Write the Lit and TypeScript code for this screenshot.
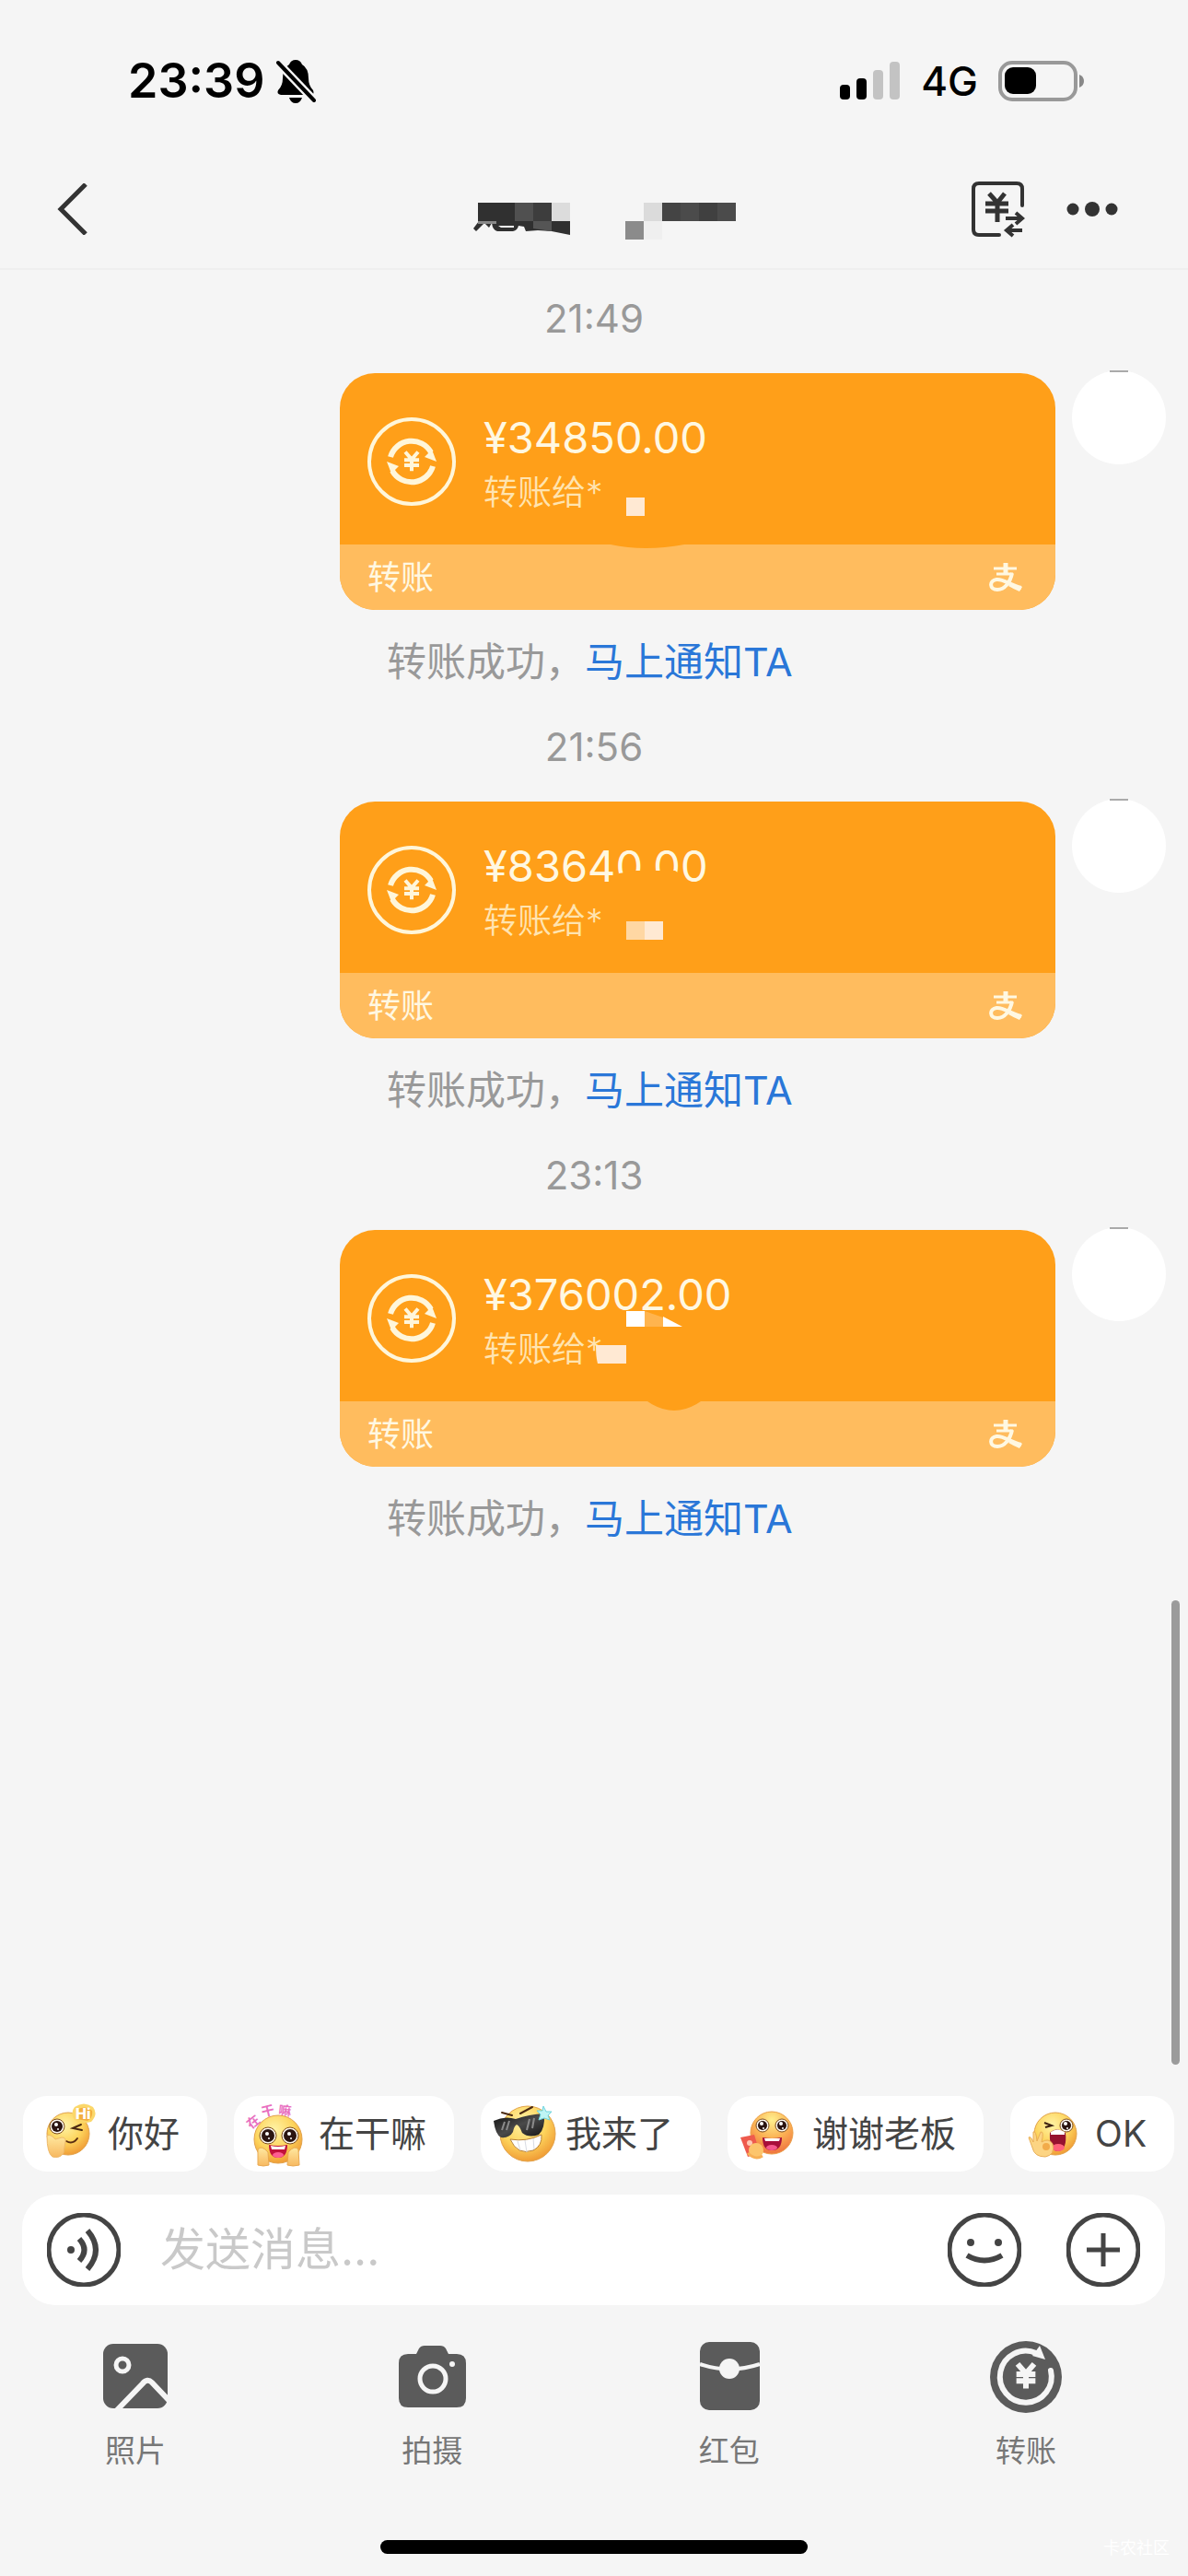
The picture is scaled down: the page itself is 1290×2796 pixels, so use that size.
import { LitElement, html, css, svg } from "lit";
import { customElement, property } from "lit/decorators.js";

const yen = (x: number, y: number, s: number, w: number, color: string) => svg`
  <path fill="none" stroke=${color} stroke-width=${w}
    d="M${x - s} ${y - s * 1.35} L${x} ${y - s * 0.2} L${x + s} ${y - s * 1.35} M${x} ${y - s * 0.2} V${y + s * 1.6} M${x - s * 1.15} ${y - s * 0.1} H${x + s * 1.15} M${x - s * 1.15} ${y + s * 0.7} H${x + s * 1.15}"/>`;

const gradients = svg`
  <defs>
    <radialGradient id="face" cx="0.42" cy="0.3" r="0.75">
      <stop offset="0" stop-color="#fff3a6"/><stop offset="0.55" stop-color="#fdd45c"/><stop offset="1" stop-color="#ee9430"/>
    </radialGradient>
    <radialGradient id="blush" cx="0.5" cy="0.2" r="0.85">
      <stop offset="0" stop-color="#fff08e"/><stop offset="0.5" stop-color="#fbb254"/><stop offset="1" stop-color="#ee6a3c"/>
    </radialGradient>
    <linearGradient id="hand" x1="0" y1="0" x2="0" y2="1">
      <stop offset="0" stop-color="#ffe9a0"/><stop offset="1" stop-color="#f7b860"/>
    </linearGradient>
    <linearGradient id="lens" x1="0" y1="0" x2="1" y2="1">
      <stop offset="0" stop-color="#0c0c0c"/><stop offset="0.5" stop-color="#4a4a4a"/><stop offset="1" stop-color="#141414"/>
    </linearGradient>
  </defs>`;

const eye = (x: number, y: number, r: number) => svg`
  <circle cx=${x} cy=${y} r=${r} fill="#fffaf0" stroke="#7a4a1c" stroke-width="1"/>
  <circle cx=${x} cy=${y} r=${r - 2} fill="#2b1512"/>
  <circle cx=${x - 1} cy=${y - 2} r="2" fill="#fff"/>
  <circle cx=${x + 1} cy=${y + 3} r="1" fill="#fff"/>`;

const emojis: Record<string, unknown> = {
  hi: svg`
    <circle cx="49" cy="41" r="23" fill="url(#face)" stroke="#e2a24a" stroke-width="1"/>
    ${eye(37, 33, 8)}
    <path d="M63 31 L54 35 L64 37" stroke="#4b2a12" stroke-width="2" fill="none" stroke-linecap="round"/>
    <path d="M47 49 Q54 53 59 46" stroke="#5a2d12" stroke-width="2" fill="none" stroke-linecap="round"/>
    <path d="M26 43 Q30 41 35 47 L42 45 Q47 45 46 50 L44 62 Q40 68 32 66 Q26 62 26 43 Z" fill="url(#hand)" stroke="#eeb96a" stroke-width="1"/>
    <path d="M56 12 Q66 5 76 12 Q82 20 74 28 Q64 31 56 26 Q51 18 56 12 Z" fill="#fbd76a"/>
    <path d="M60 14 Q68 10 75 16 Q76 24 70 27 L58 25 Z" fill="#f3ae3e"/>
    <text x="57" y="25" font-size="16" font-weight="800" fill="#fff">Hi</text>`,
  wow: svg`
    <g fill="#e86fc0" font-size="14" font-weight="700" text-anchor="middle">
      <text transform="translate(24 32) rotate(-38)">在</text>
      <text transform="translate(38 21) rotate(-14)">干</text>
      <text transform="translate(55 21) rotate(6)">嘛</text>
    </g>
    <circle cx="48" cy="47" r="26" fill="url(#face)" stroke="#e2a24a" stroke-width="1"/>
    ${eye(37, 43, 9)}${eye(61, 43, 9)}
    <path d="M38 53 Q48 55 58 53 Q58 67 48 67 Q38 67 38 53 Z" fill="#c1123c"/>
    <path d="M40 54 Q48 56 56 54 L55 58 H41 Z" fill="#fff"/>
    <ellipse cx="48" cy="64" rx="6" ry="3" fill="#ff5e92"/>
    <path d="M26 58 Q30 53 37 61 L38 75 Q32 77 26 75 Z M70 58 Q66 53 59 61 L58 75 Q64 77 71 75 Z" fill="url(#hand)" stroke="#e9a950" stroke-width="1"/>`,
  cool: svg`
    <circle cx="51" cy="41" r="30" fill="url(#face)" stroke="#e2a24a" stroke-width="1"/>
    <path d="M23 18 L34 21 M43 19 L56 12" stroke="#4b2a12" stroke-width="2" stroke-linecap="round"/>
    <path d="M14 27 Q26 21 38 25 Q52 20 69 19 Q70 36 63 42 Q52 46 45 40 Q42 32 39 31 Q36 33 35 39 Q31 46 22 45 Q16 42 14 27 Z" fill="url(#lens)"/>
    <path d="M26 28 L23 37 M31 27 L28 37 M53 25 L50 37 M58 24 L56 35" stroke="#8b8b8b" stroke-width="2"/>
    <path d="M32 47 Q50 50 66 42 Q67 54 57 59 Q40 65 32 47 Z" fill="#fff" stroke="#b98236" stroke-width="1"/>
    <path d="M40 49 L43 59 M48 48 L50 61 M57 46 L58 58" stroke="#d8dbe2" stroke-width="1"/>
    <path d="M68 11 L71 17 L77 17 L73 21 L75 26 L69 24 L63 26 L65 20 L61 16 L67 16 Z" fill="#bff5f4" stroke="#6fd3dc" stroke-width="1"/>`,
  thanks: svg`
    <circle cx="48" cy="40" r="23" fill="url(#blush)" stroke="#eba048" stroke-width="1"/>
    ${eye(38, 32, 7)}${eye(59, 32, 7)}
    <path d="M38 45 Q48 47 59 45 Q59 59 48 59 Q38 59 38 45 Z" fill="#a80f3a"/>
    <path d="M40 46 H57 L56 49 H41 Z" fill="#fff"/>
    <ellipse cx="48" cy="56" rx="6" ry="3" fill="#f5588c"/>
    <path d="M14 45 L29 42 L35 62 L22 66 Z" fill="#ee5a4d"/>
    <circle cx="24" cy="51" r="3" fill="#ffc9b4"/>
    <circle cx="31" cy="59" r="8" fill="#fcc56c"/>
    <path d="M22 62 Q30 70 38 65" stroke="#f7b055" stroke-width="3" fill="none"/>`,
  ok: svg`
    <circle cx="49" cy="41" r="23" fill="url(#face)" stroke="#e2a24a" stroke-width="1"/>
    <path d="M37 29 L45 32 L38 34" stroke="#3d2010" stroke-width="2" fill="none"/>
    ${eye(61, 32, 7)}
    <path d="M43 40 Q50 33 60 40 Q62 58 52 60 Q42 60 43 40 Z" fill="#96122f"/>
    <path d="M44 39 Q51 34 59 39 V42 H44 Z" fill="#fff"/>
    <ellipse cx="52" cy="56" rx="7" ry="4" fill="#ff6179"/>
    <path d="M20 45 Q22 43 25 50 L25 39 Q28 37 29 49 L33 39 Q37 38 34 50 Q42 45 46 52 Q49 64 38 66 Q26 66 24 56 Z" fill="#fcd483" stroke="#e9ae56" stroke-width="1"/>
    <circle cx="39" cy="55" r="4" fill="#f2ab4a"/>`,
};

const arrowRing = svg`
  <circle cx="48" cy="48" r="46" fill="none" stroke="#fff6da" stroke-width="4"/>
  <path d="M25 43 A24 24 0 0 1 69 38" fill="none" stroke="#fff6da" stroke-width="6"/>
  <path d="M70 35 L75 48 L62 43 Z" fill="#fff6da"/>
  <path d="M71 53 A24 24 0 0 1 27 58" fill="none" stroke="#fff6da" stroke-width="6"/>
  <path d="M26 61 L21 48 L34 53 Z" fill="#fff6da"/>
  ${yen(48, 47, 7, 4, "#fff6da")}`;

const masks = [
  svg`<rect x="311" y="135" width="20" height="20" fill="#ffe9d3"/>
      <path d="M294 186 Q331 194 374 186 Z" fill="#ff9f19"/>`,
  svg`<path d="M303 78 L322 75 H353 L364 75 L374 82 V96 H303 Z" fill="#ff9f19"/>
      <rect x="311" y="130" width="20" height="20" fill="#ffd7a3"/>
      <rect x="331" y="130" width="20" height="20" fill="#ffe9d3"/>`,
  svg`<rect x="311" y="88" width="20" height="17" fill="#fff"/>
      <path d="M331 88 L351 95 V105 H331 Z" fill="#ffb44e"/>
      <path d="M351 94 L372 105 H351 Z" fill="#fff"/>
      <path d="M278 125 H311 V145 H280 Q278 138 278 125 Z" fill="#ffe9d3"/>
      <path d="M334 186 Q363 206 392 186 Z" fill="#ff9f19"/>`,
];

@customElement("transfer-message")
class TransferMessage extends LitElement {
  @property() time = "";
  @property() amount = "";
  @property({ type: Number }) mask = 0;

  static styles = css`
    :host { display: block; }
    .time { text-align: center; padding: 25px 0 31px; font-size: 42px; line-height: 56px; color: #999; }
    .row { display: flex; justify-content: flex-end; align-items: flex-start; gap: 18px; padding-right: 24px; }
    .card { position: relative; flex: 0 1 777px; border-radius: 38px; overflow: hidden; background: #ff9f19; }
    .body { display: flex; align-items: center; gap: 30px; height: 186px; padding: 6px 30px 0; box-sizing: border-box; }
    .ring { width: 96px; height: 96px; flex: none; }
    .words { padding-top: 8px; }
    .amount { font-size: 47px; line-height: 60px; color: #fff8e2; }
    .to { font-size: 37px; line-height: 60px; color: #ffe4b0; font-weight: 350; }
    .foot { display: flex; justify-content: space-between; align-items: center; height: 71px; padding: 0 36px 0 30px; background: #ffbc5e; font-size: 36px; line-height: 60px; color: #fff8e2; }
    .pay { width: 36px; height: 32px; }
    .mask { position: absolute; left: 0; top: 0; width: 777px; height: 257px; }
    .avatar { flex: none; position: relative; width: 102px; height: 102px; margin-top: -3px; border-radius: 50%; background: #fff; }
    .avatar::before { content: ""; position: absolute; left: 41px; top: 0; width: 20px; height: 2px; background: #aaa; }
    .notice { padding: 28px 0 12px 420px; font-size: 43px; line-height: 56px; color: #999; }
    .link { color: #2a77d8; text-decoration: none; }
  `;

  render() {
    return html`
      <div class="time">${this.time}</div>
      <div class="row">
        <article class="card">
          <div class="body">
            <svg class="ring" viewBox="0 0 96 96">${arrowRing}</svg>
            <div class="words">
              <div class="amount">${this.amount}</div>
              <div class="to">转账给*</div>
            </div>
          </div>
          <div class="foot">
            <span>转账</span>
            <svg class="pay" viewBox="0 0 36 32" fill="none" stroke="#fff8e2">
              <path d="M5 6 H30 M8 12 H26" stroke-width="3"/>
              <path d="M18 0 V12" stroke-width="5"/>
              <path d="M25 11 C23 21 17 29 9 29 C0 29 0 19 8 18 C16 17 22 24 35 27" stroke-width="4"/>
              <path d="M23 23 Q28 26 36 26 L33 31 Q26 28 21 25 Z" fill="#fff8e2" stroke="none"/>
            </svg>
          </div>
          <svg class="mask" viewBox="0 0 777 257" aria-hidden="true">${masks[this.mask]}</svg>
        </article>
        <div class="avatar"></div>
      </div>
      <div class="notice">转账成功，<a class="link" href="#notify">马上通知TA</a></div>
    `;
  }
}

@customElement("app-root")
class AppRoot extends LitElement {
  static styles = css`
    :host { display: flex; flex-direction: column; min-height: 100vh; background: #f5f5f5; color: #333; font-family: Inter, "Noto Sans CJK SC", sans-serif; }
    button { font: inherit; color: inherit; background: none; border: 0; padding: 0; margin: 0; display: flex; }
    svg { display: block; }
    .status { display: flex; justify-content: space-between; align-items: center; height: 175px; padding: 0 112px 0 139px; box-sizing: border-box; color: #000; }
    .left { display: flex; align-items: center; gap: 13px; font-size: 52px; line-height: 60px; font-weight: 600; }
    .right { display: flex; align-items: center; gap: 22px; font-size: 44px; line-height: 60px; font-weight: 500; }
    .nav { display: grid; grid-template-columns: 1fr auto 1fr; align-items: center; height: 118px; padding: 0 76px 12px 60px; box-sizing: border-box; border-bottom: 2px solid #efefef; }
    .title { margin: 26px 0 0 40px; }
    .actions { display: flex; align-items: center; justify-content: flex-end; gap: 45px; }
    .chat { flex: 1; position: relative; }
    .thumb { position: absolute; right: 9px; bottom: 0; width: 9px; height: 504px; border-radius: 5px; background: #9b9b9b; }
    .chips { display: flex; gap: 29px; padding: 34px 19px 25px 25px; overflow: hidden; }
    .chip { flex: none; align-items: center; padding-right: 30px; height: 82px; border-radius: 26px; background: #fff; font-size: 39px; line-height: 56px; color: #444; }
    .emoji { width: 92px; height: 82px; }
    .composer { display: flex; align-items: center; height: 120px; margin: 0 25px 0 24px; padding: 0 27px; box-sizing: border-box; border-radius: 36px; background: #fff; }
    .input { flex: 1; min-width: 0; margin: 0 40px 0 43px; padding: 0; border: 0; outline: 0; background: none; font: inherit; font-size: 49px; line-height: 64px; color: #333; }
    .input::placeholder { color: #c9c9c9; opacity: 1; }
    .plus { margin-left: 49px; }
    .tools { display: flex; justify-content: space-between; padding: 38px 136px 0 107px; }
    .tool { flex-direction: column; align-items: center; gap: 18px; width: 80px; font-size: 33px; line-height: 44px; color: #777; }
    .bottom { position: relative; display: flex; justify-content: center; padding: 75px 0 24px; }
    .home { width: 36%; height: 15px; border-radius: 8px; background: #000; }
    .mark { position: absolute; right: 20px; bottom: 16px; font-size: 18px; line-height: 28px; color: #fff; }
  `;

  private chips = [
    ["hi", "你好"], ["wow", "在干嘛"], ["cool", "我来了"], ["thanks", "谢谢老板"], ["ok", "OK"],
  ];

  private messages = [
    ["21:49", "¥34850.00"], ["21:56", "¥83640.00"], ["23:13", "¥376002.00"],
  ];

  private tools = [
    ["照片", svg`<rect x="5" y="4" width="70" height="70" rx="11" fill="#5b5b5b"/>
      <circle cx="26" cy="27" r="7" fill="none" stroke="#f5f5f5" stroke-width="5"/>
      <path d="M20 76 L48 47 Q53 41 58 46 L77 66" fill="none" stroke="#f5f5f5" stroke-width="6"/>`],
    ["拍摄", svg`<path d="M14 15 H23 L26 9 Q28 6 32 6 H49 Q53 6 55 9 L58 15 H67 Q77 15 77 25 V63 Q77 73 67 73 H14 Q4 73 4 63 V25 Q4 15 14 15 Z" fill="#5b5b5b"/>
      <circle cx="41" cy="42" r="14" fill="none" stroke="#f5f5f5" stroke-width="5"/>
      <circle cx="62" cy="26" r="3" fill="#f5f5f5"/>`],
    ["红包", svg`<rect x="8" y="2" width="65" height="74" rx="10" fill="#5b5b5b"/>
      <path d="M8 26 Q40 37 73 26" fill="none" stroke="#f5f5f5" stroke-width="4"/>
      <circle cx="40" cy="31" r="11" fill="#f5f5f5"/>`],
    ["转账", svg`<circle cx="40" cy="40" r="39" fill="#5b5b5b"/>
      <path d="M67 33 A28 28 0 1 1 51 14" fill="none" stroke="#f5f5f5" stroke-width="6" stroke-linecap="round"/>
      <path d="M55 6 L61 21 L47 17 Z" fill="#f5f5f5"/>
      ${yen(40, 38, 9, 6, "#f5f5f5")}`],
  ];

  render() {
    return html`
      <div class="status">
        <div class="left">
          <span>23:39</span>
          <svg width="43" height="48" viewBox="0 0 43 48">
            <path d="M21 1 Q26 1 28 6 Q35 10 35 21 Q35 29 40 34 Q42 39 37 39 H5 Q0 38 2 34 Q7 29 7 21 Q7 10 14 6 Q16 1 21 1 Z" fill="#000"/>
            <path d="M14 42 H28 Q26 48 21 48 Q16 48 14 42 Z" fill="#000"/>
            <path d="M-1 1 L44 48" stroke="#f5f5f5" stroke-width="9"/>
            <path d="M2 4 L41 45" stroke="#000" stroke-width="4" stroke-linecap="round"/>
          </svg>
        </div>
        <div class="right">
          <svg width="66" height="42" viewBox="0 0 66 42">
            <rect x="0" y="25" width="11" height="16" rx="4"/>
            <rect x="18" y="18" width="11" height="23" rx="4"/>
            <rect x="36" y="9" width="11" height="32" rx="4" fill="#c3c3c3"/>
            <rect x="54" y="0" width="11" height="41" rx="4" fill="#c3c3c3"/>
          </svg>
          <span>4G</span>
          <svg width="94" height="44" viewBox="0 0 94 44">
            <rect x="2" y="2" width="82" height="40" rx="13" fill="none" stroke="#999" stroke-width="4"/>
            <rect x="7" y="7" width="34" height="29" rx="9"/>
            <path d="M88 15 Q93 17 93 22 Q93 27 88 29 Z" fill="#888"/>
          </svg>
        </div>
      </div>
      <header class="nav">
        <button aria-label="返回">
          <svg width="40" height="56" viewBox="0 0 40 56"><path d="M33 1 L6 28 L33 55" fill="none" stroke="#333" stroke-width="5"/></svg>
        </button>
        <h1 class="title">
          <svg width="286" height="40" viewBox="0 0 286 40" role="img" aria-label="***">
            <rect x="5" y="0" width="40" height="20" fill="#303030"/>
            <rect x="45" y="0" width="20" height="20" fill="#505050"/>
            <rect x="65" y="0" width="20" height="20" fill="#3d3d3d"/>
            <rect x="85" y="0" width="20" height="20" fill="#dcdcdc"/>
            <path d="M6 20 L0 28 L3 31 L12 22 L17 27 L20 22 Q21 30 26 31 H43 Q48 30 49 25 L55 26 L57 31 L70 30 L85 31 L105 35 V20 Z" fill="#303030"/>
            <path d="M5 20 H25 V23 H5 Z" fill="#888"/>
            <path d="M27 25 H44 V27 H30 Z" fill="#f5f5f5"/>
            <path d="M65 20 H85 V31 L65 28 Z" fill="#555"/>
            <rect x="165" y="20" width="20" height="20" fill="#8b8b8b"/>
            <rect x="185" y="0" width="20" height="20" fill="#dbdbdb"/>
            <rect x="185" y="20" width="20" height="20" fill="#efefef"/>
            <rect x="205" y="0" width="20" height="20" fill="#444"/>
            <rect x="225" y="0" width="20" height="20" fill="#4b4b4b"/>
            <rect x="245" y="0" width="20" height="20" fill="#404040"/>
            <rect x="265" y="0" width="20" height="20" fill="#4b4b4b"/>
          </svg>
        </h1>
        <div class="actions">
          <button aria-label="转账记录">
            <svg width="58" height="62" viewBox="0 0 58 62" fill="none" stroke="#333" stroke-width="4">
              <path d="M55 27 V9 Q55 3 49 3 H8 Q2 3 2 9 V53 Q2 59 8 59 H30" stroke-linecap="round"/>
              <path d="M19 14 L28 24 L36 14 M28 24 V45 M15 25 H40 M15 33 H40" stroke-width="5"/>
              <path d="M37 41 H54 M48 35 L55 41 L48 47 M55 54 H38 M45 48 L38 54 L45 60"/>
            </svg>
          </button>
          <button aria-label="更多">
            <svg width="56" height="18" viewBox="0 0 56 18" fill="#333"><circle cx="7" cy="9" r="6.5"/><circle cx="28" cy="9" r="8"/><circle cx="49" cy="9" r="6.5"/></svg>
          </button>
        </div>
      </header>
      <main class="chat">
        ${this.messages.map(([t, a], i) => html`<transfer-message time=${t} amount=${a} mask=${i}></transfer-message>`)}
        <div class="thumb"></div>
      </main>
      <div class="chips">
        ${this.chips.map(([e, t]) => html`<button class="chip"><svg class="emoji" viewBox="0 0 92 82" aria-hidden="true">${gradients}${emojis[e]}</svg><span>${t}</span></button>`)}
      </div>
      <div class="composer">
        <button aria-label="语音">
          <svg width="80" height="80" viewBox="0 0 80 80" fill="none" stroke="#444" stroke-width="5">
            <circle cx="40" cy="40" r="38"/>
            <circle cx="26" cy="40" r="4" fill="#444" stroke="none"/>
            <path d="M35 28 Q46 40 35 52 M44 19 Q62 40 44 61" stroke-width="6"/>
          </svg>
        </button>
        <input class="input" type="text" aria-label="发送消息" placeholder="发送消息..." />
        <button aria-label="表情">
          <svg width="80" height="80" viewBox="0 0 80 80" fill="none" stroke="#444" stroke-width="5">
            <circle cx="40" cy="40" r="38"/>
            <circle cx="25" cy="32" r="4" fill="#444" stroke="none"/><circle cx="55" cy="32" r="4" fill="#444" stroke="none"/>
            <path d="M21 46 Q40 57 59 46" stroke-width="6"/>
          </svg>
        </button>
        <button class="plus" aria-label="更多功能">
          <svg width="80" height="80" viewBox="0 0 80 80" fill="none" stroke="#444" stroke-width="5">
            <circle cx="40" cy="40" r="38"/><path d="M40 22 V58 M22 40 H58"/>
          </svg>
        </button>
      </div>
      <nav class="tools">
        ${this.tools.map(([t, icon]) => html`<button class="tool"><svg width="80" height="80" viewBox="0 0 80 80">${icon}</svg><span>${t}</span></button>`)}
      </nav>
      <footer class="bottom">
        <div class="home"></div>
        <span class="mark">卡农社区</span>
      </footer>
    `;
  }
}
